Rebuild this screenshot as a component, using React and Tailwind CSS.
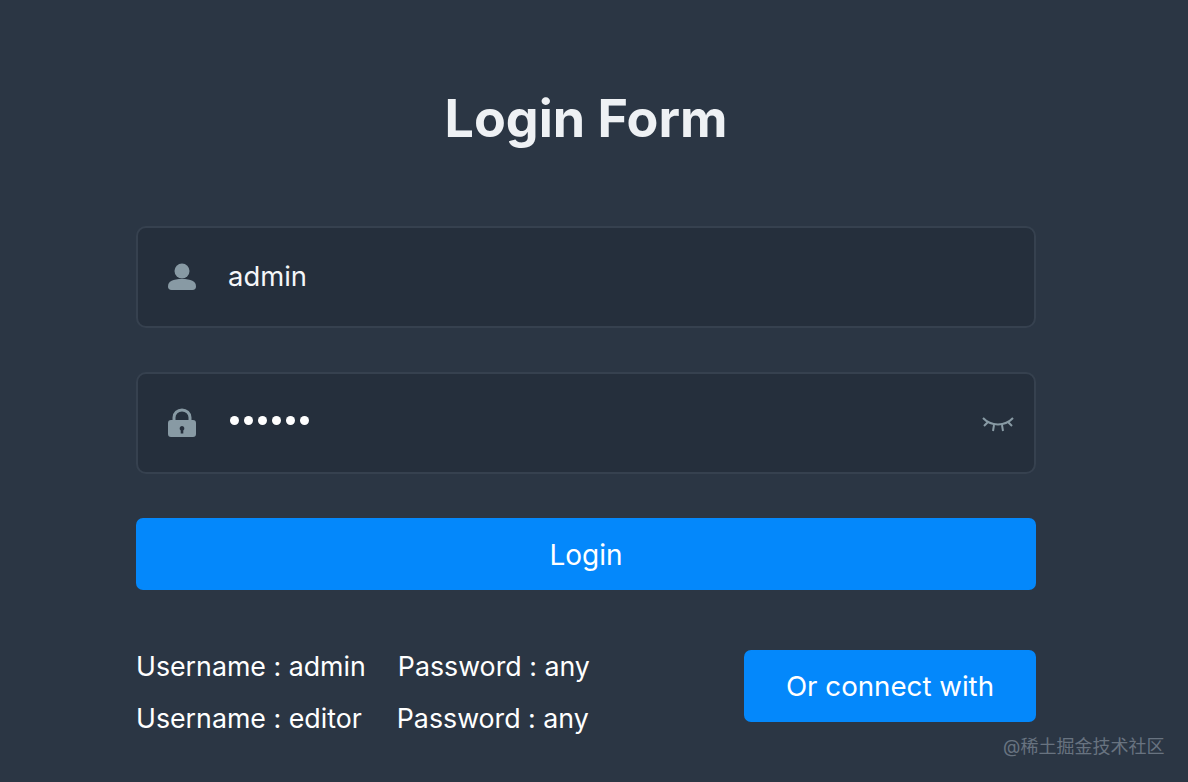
import React from "react";

const UserIcon = () => (
  <svg width="28" height="28" viewBox="0 0 28 28" fill="#889aa4">
    <circle cx="14" cy="8" r="7.5" />
    <path d="M0 23.5C0 18 5 16 14 16s14 2 14 7.5c0 2-1.2 3.5-3.5 3.500h-21C1.200 27 0 25.500 0 23.500z" />
  </svg>
);

const LockIcon = () => (
  <svg width="28" height="30" viewBox="0 0 28 30">
    <path d="M6 13V9.500a8 7.500 0 0 1 16 0V13" fill="none" stroke="#889aa4" strokeWidth="3" />
    <path
      fill="#889aa4"
      fillRule="evenodd"
      d="M3 12h22a3 3 0 0 1 3 3v11a3 3 0 0 1-3 3H3a3 3 0 0 1-3-3V15a3 3 0 0 1 3-3zm11 6a2.400 2.400 0 0 0-1.300 4.400V25.500h2.600v-3.100A2.400 2.400 0 0 0 14 18z"
    />
  </svg>
);

const EyeClosedIcon = () => (
  <svg width="34" height="20" viewBox="0 0 34 20" fill="none" stroke="#889aa4" strokeWidth="2">
    <path d="M2 2c8 8.500 22 8.500 30 0" />
    <path d="M7 6L3 10M27 6l4 4M13 9l-1 6M21 9l1 6" />
  </svg>
);

const Field = ({ icon, value, dots, right }) => (
  <div className="flex items-center h-[102px] rounded-[10px] border-2 border-[#36414f] bg-[#252f3c]">
    <div className="flex justify-center w-[88px]">{icon}</div>
    {dots ? (
      <div className="flex gap-[5px] flex-1 pb-[5px] pl-[4px]">
        {[0, 1, 2, 3, 4, 5].map((i) => (
          <span key={i} className="w-[9px] h-[9px] rounded-full bg-white" />
        ))}
      </div>
    ) : (
      <span className="flex-1 pl-[2px] text-[27.4px] text-[#f4f6f8] pb-[1px]">{value}</span>
    )}
    {right}
  </div>
);

const App = () => {
  return (
    <div
      className="relative h-[782px] overflow-hidden bg-[#2b3644] pl-[136px] pr-[152px] pt-[87px]"
      style={{ fontFamily: "Inter, 'Noto Sans CJK SC', sans-serif" }}
    >
      <h1 className="text-center text-[52px] leading-[64px] font-bold text-[#eef1f4]">Login Form</h1>

      <div className="mt-[75px] flex flex-col gap-[44px]">
        <Field icon={<UserIcon />} value="admin" />
        <Field
          icon={<LockIcon />}
          dots
          right={
            <div className="pr-[19px] pt-[5px]">
              <EyeClosedIcon />
            </div>
          }
        />
      </div>

      <button className="mt-[44px] block w-full h-[72px] rounded-[7px] bg-[#0488fb] pt-[1px] text-[28px] text-white">
        Login
      </button>

      <div className="mt-[60px] flex justify-between items-start">
        <div className="text-[26.75px] leading-[52px] text-white -mt-[10px]">
          <div className="flex gap-[32px]">
            <span>Username : admin</span>
            <span>Password : any</span>
          </div>
          <div className="flex gap-[35px]">
            <span>Username : editor</span>
            <span>Password : any</span>
          </div>
        </div>
        <button className="w-[292px] h-[72px] rounded-[7px] bg-[#0488fb] pt-[1px] text-[27.7px] text-white">
          Or connect with
        </button>
      </div>

      <div className="absolute left-[1003px] top-[735px] text-[18px] leading-6 text-[#687380] whitespace-nowrap">
        @稀土掘金技术社区
      </div>
    </div>
  );
};

export default App;
